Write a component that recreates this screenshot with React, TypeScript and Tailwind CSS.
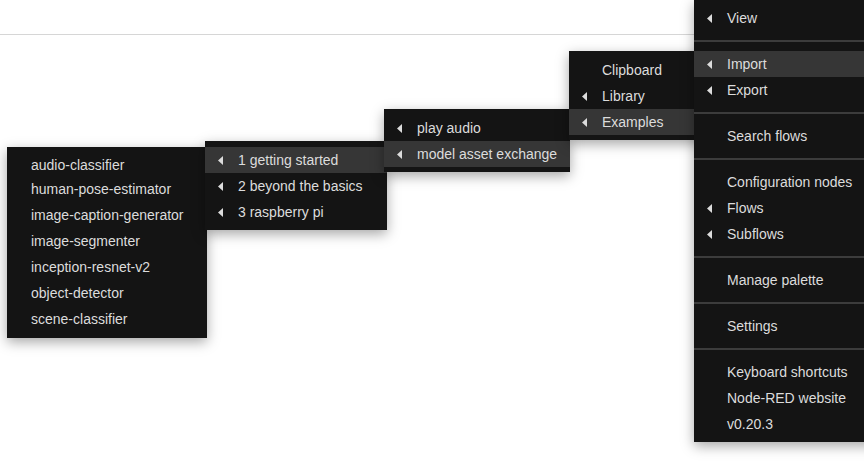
import React from "react";

type Item =
  | { sep: true }
  | { label: string; sub?: boolean; active?: boolean; h?: string };

const Caret = () => (
  <svg width="6" height="9" viewBox="0 0 6 9" className="shrink-0">
    <polygon points="5,0 5,9 0,4.5" fill="#dcdcdc" />
  </svg>
);

// one dropdown panel; submenus sit over each other like the real context menu
function Menu({
  items,
  className,
  textPad = "pl-[33px]",
  pad = "py-[5px]",
}: {
  items: Item[];
  className: string;
  textPad?: string;
  pad?: string;
}) {
  return (
    <div
      className={`absolute flex flex-col bg-[#141414] shadow-[0_4px_12px_rgba(0,0,0,0.35)] ${pad} ${className}`}
    >
      {items.map((it, i) =>
        "sep" in it ? (
          <div key={i} className="h-[20px] flex items-center">
            <div className="h-[2px] w-full bg-[#3c3c3c]" />
          </div>
        ) : (
          <div
            key={i}
            className={`flex items-center gap-[14px] whitespace-nowrap ${it.h ?? "h-[26px]"} ${textPad} pr-4 ${
              it.active ? "bg-[#363636]" : ""
            }`}
          >
            {it.sub ? (
              <span className="flex w-[6px]">
                <Caret />
              </span>
            ) : null}
            <span className="pt-px">{it.label}</span>
          </div>
        )
      )}
    </div>
  );
}

export default function App() {
  const main: Item[] = [
    { label: "View", sub: true },
    { sep: true },
    { label: "Import", sub: true, active: true },
    { label: "Export", sub: true },
    { sep: true },
    { label: "Search flows" },
    { sep: true },
    { label: "Configuration nodes" },
    { label: "Flows", sub: true },
    { label: "Subflows", sub: true },
    { sep: true },
    { label: "Manage palette" },
    { sep: true },
    { label: "Settings" },
    { sep: true },
    { label: "Keyboard shortcuts" },
    { label: "Node-RED website" },
    { label: "v0.20.3" },
  ];

  const importMenu: Item[] = [
    { label: "Clipboard" },
    { label: "Library", sub: true },
    { label: "Examples", sub: true, active: true },
  ];

  const examples: Item[] = [
    { label: "play audio", sub: true },
    { label: "model asset exchange", sub: true, active: true },
  ];

  const mae: Item[] = [
    { label: "1 getting started", sub: true, active: true },
    { label: "2 beyond the basics", sub: true },
    { label: "3 raspberry pi", sub: true },
  ];

  const leaf: Item[] = [
    { label: "audio-classifier", h: "h-[22px]" },
    { label: "human-pose-estimator" },
    { label: "image-caption-generator" },
    { label: "image-segmenter" },
    { label: "inception-resnet-v2" },
    { label: "object-detector" },
    { label: "scene-classifier" },
  ];

  // rows with a caret: caret column starts at 13px, label at 33px
  const withCaret = "pl-[13px] [&>span:only-child]:pl-[20px]";

  return (
    <div
      className="relative w-[864px] h-[466px] overflow-hidden bg-white text-[14px] text-[#dcdcdc]"
      style={{ fontFamily: '"Liberation Sans", Arial, sans-serif' }}
    >
      <div className="h-[35px] border-b border-[#d6d6d6]" />

      <Menu items={leaf} className="left-[7px] top-[147px] w-[200px] z-10" textPad="pl-[24px]" pad="pt-[7px] pb-[6px]" />
      <Menu items={mae} className="left-[205px] top-[141px] w-[182px] z-20" textPad={withCaret} pad="pt-[6px] pb-[5px]" />
      <Menu items={examples} className="left-[384px] top-[109px] w-[186px] z-30" textPad={withCaret} pad="pt-[6px] pb-[5px]" />
      <Menu items={importMenu} className="left-[569px] top-[51px] w-[140px] z-40" textPad={withCaret} pad="pt-[6px] pb-[5px]" />
      <Menu items={main} className="left-[694px] top-0 w-[190px] z-50" textPad={withCaret} />
    </div>
  );
}
